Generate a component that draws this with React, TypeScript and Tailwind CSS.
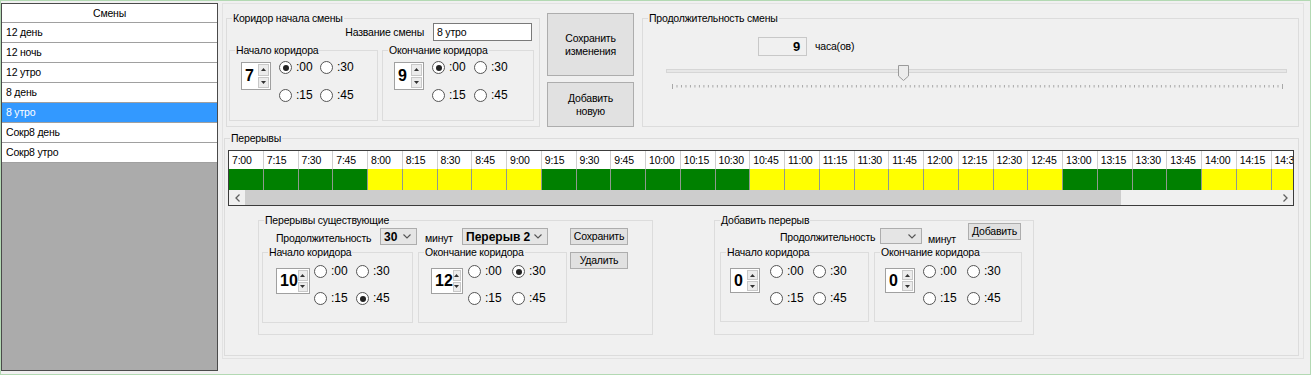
const shifts = ["12 день", "12 ночь", "12 утро", "8 день", "8 утро", "Сокр8 день", "Сокр8 утро"];

const times: string[] = [];
for (let m = 7 * 60; m <= 14 * 60 + 30; m += 15) {
  times.push(`${Math.floor(m / 60)}:${String(m % 60).padStart(2, "0")}`);
}
// green = рабочее время, yellow = коридор перерыва
const slots = times.map((_, i) => (i < 4 || (i >= 9 && i <= 14) || (i >= 24 && i <= 27) ? "g" : "y"));

function Group({ title, className, children }: { title: string; className: string; children?: React.ReactNode }) {
  return (
    <div className={"relative shrink-0 border border-[#dcdcdc] " + className}>
      <span className="absolute -top-[7px] left-[5px] bg-[#f0f0f0] px-[1px] leading-[13px] whitespace-nowrap">{title}</span>
      {children}
    </div>
  );
}

function Spin({ value, className }: { value: string; className: string }) {
  return (
    <div className={"flex shrink-0 border border-[#a0a0a0] bg-white p-[1px] tracking-normal " + className}>
      <div className="flex flex-1 items-center pl-[2px] text-[16px] font-bold leading-none">{value}</div>
      <div className="flex w-[11px] flex-col gap-[1px]">
        {[0, 1].map((k) => (
          <div key={k} className="flex flex-1 items-center justify-center border border-[#c8c8c8] bg-[#ececec]">
            <svg width="5" height="3" viewBox="0 0 5 3">
              <path d={k === 0 ? "M0 3 L2.5 0 L5 3 Z" : "M0 0 L2.5 3 L5 0 Z"} fill="#333" />
            </svg>
          </div>
        ))}
      </div>
    </div>
  );
}

function Radio({ label, on }: { label: string; on?: boolean }) {
  return (
    <div className="flex h-[13px] items-center whitespace-nowrap">
      <span className="flex h-[13px] w-[13px] shrink-0 items-center justify-center rounded-full border border-[#555] bg-white">
        {on && <span className="h-[6px] w-[6px] rounded-full bg-[#222]" />}
      </span>
      <span className="ml-[4px] text-[12px] tracking-normal">{label}</span>
    </div>
  );
}

function Radios({ checked, className }: { checked: string; className: string }) {
  return (
    <div className={"grid shrink-0 " + className}>
      {[":00", ":30", ":15", ":45"].map((l) => (
        <Radio key={l} label={l} on={l === checked} />
      ))}
    </div>
  );
}

function Chevron() {
  return (
    <svg width="8" height="5" viewBox="0 0 8 5" className="shrink-0">
      <polyline points="0.5,0.5 4,4 7.5,0.5" fill="none" stroke="#555" strokeWidth="1.1" />
    </svg>
  );
}

function Combo({ value, className }: { value?: string; className: string }) {
  return (
    <div className={"flex shrink-0 items-center justify-between border border-[#adadad] bg-[#e5e5e5] pl-[3px] pr-[5px] text-[12px] font-bold leading-none tracking-normal " + className}>
      <span>{value}</span>
      <Chevron />
    </div>
  );
}

function Btn({ children, className }: { children: React.ReactNode; className: string }) {
  return (
    <div className={"flex shrink-0 items-center justify-center border border-[#adadad] bg-[#e1e1e1] text-center leading-[13px] " + className}>
      {children}
    </div>
  );
}

export default function App() {
  return (
    <div className="flex h-[375px] w-[1311px] items-start overflow-hidden border border-[#b3d9b3] bg-[#f0f0f0] font-['Liberation_Sans',Arial,sans-serif] text-[10.5px] leading-[13px] tracking-[-0.2px] text-black">
      {/* список смен */}
      <div className="mt-[2px] h-[368px] w-[217px] shrink-0 border border-[#4a4a4a] bg-[#ababab]">
        <div className="flex h-[19px] items-center justify-center border-b border-[#a0a0a0] bg-white">Смены</div>
        {shifts.map((s) => (
          <div
            key={s}
            className={
              "flex h-[20px] items-center border-b border-[#a0a0a0] pl-[4px] " +
              (s === "8 утро" ? "bg-[#3399ff] text-white" : "bg-white")
            }
          >
            {s}
          </div>
        ))}
      </div>

      <div className="ml-[4px] mt-[2px] h-[356px] w-[1082px] shrink-0 border border-[#e2e2e2]">
        <div className="mt-[14px] flex items-start">
          <Group title="Коридор начала смены" className="ml-[3px] h-[109px] w-[314px]">
            <div className="mt-[4px] flex items-center justify-end gap-[9px] pr-[7px]">
              <span>Название смены</span>
              <div className="flex h-[18px] w-[99px] items-center border border-[#7a7a7a] bg-white px-[3px]">8 утро</div>
            </div>
            <div className="mt-[9px] flex gap-[4px] pl-[2px]">
              <Group title="Начало коридора" className="h-[71px] w-[149px]">
                <div className="flex items-start">
                  <Spin value="7" className="ml-[11px] mt-[11px] h-[28px] w-[30px]" />
                  <Radios checked=":00" className="ml-[8px] mt-[10px] grid-cols-[41px_auto] gap-y-[15px]" />
                </div>
              </Group>
              <Group title="Окончание коридора" className="h-[71px] w-[152px]">
                <div className="flex items-start">
                  <Spin value="9" className="ml-[11px] mt-[11px] h-[28px] w-[30px]" />
                  <Radios checked=":00" className="ml-[8px] mt-[10px] grid-cols-[42px_auto] gap-y-[15px]" />
                </div>
              </Group>
            </div>
          </Group>

          <div className="-mt-[5px] ml-[7px] flex shrink-0 flex-col">
            <Btn className="h-[63px] w-[87px]">
              Сохранить
              <br />
              изменения
            </Btn>
            <Btn className="mt-[6px] h-[45px] w-[87px]">
              Добавить
              <br />
              новую
            </Btn>
          </div>

          <Group title="Продолжительность смены" className="ml-[8px] h-[109px] w-[657px]">
            <div className="ml-[115px] mt-[18px] flex items-center">
              <div className="flex h-[19px] w-[49px] items-center justify-end border border-[#c8c8c8] bg-[#f0f0f0] pr-[6px] text-[13px] font-bold">9</div>
              <span className="ml-[8px]">часа(ов)</span>
            </div>
            <div className="relative ml-[23px] mt-[13px] h-[4px] w-[621px] border border-[#d6d6d6] bg-[#e7e7e7]">
              <svg width="11" height="16" viewBox="0 0 11 16" className="absolute -top-[5px] left-[231px]">
                <path d="M0.5 0.5 H10.5 V11 L5.5 15.5 L0.5 11 Z" fill="#ececec" stroke="#9a9a9a" />
              </svg>
            </div>
            <svg width="612" height="5" className="ml-[29px] mt-[11px] block">
              {Array.from({ length: 137 }, (_, i) => {
                const x = 0.5 + i * (610 / 136);
                const edge = i === 0 || i === 136;
                return <line key={i} x1={x} x2={x} y1={edge ? 0 : 1} y2={edge ? 5 : 3.5} stroke="#a8a8a8" />;
              })}
            </svg>
          </Group>
        </div>

        <Group title="Перерывы" className="ml-[1px] mt-[11px] h-[218px] w-[1075px]">
          <div className="ml-[3px] mt-[11px] h-[56px] w-[1066px] overflow-hidden border border-[#3c3c3c] bg-white">
            <div className="flex h-[18px]">
              {times.map((t) => (
                <div key={t} className="flex w-[34.75px] shrink-0 items-center border-r border-[#cfcfcf] pl-[3px] whitespace-nowrap">
                  {t}
                </div>
              ))}
            </div>
            <div className="flex h-[21px]">
              {slots.map((c, i) => (
                <div
                  key={i}
                  className={"w-[34.75px] shrink-0 border-r border-[#8f9a8f] " + (c === "g" ? "bg-[#008000]" : "bg-[#ffff00]")}
                />
              ))}
            </div>
            <div className="flex h-[15px] items-stretch bg-[#f0f0f0]">
              <div className="flex w-[16px] shrink-0 items-center justify-center">
                <svg width="5" height="8" viewBox="0 0 5 8">
                  <polyline points="4.5,0.5 1,4 4.5,7.5" fill="none" stroke="#606060" strokeWidth="1.3" />
                </svg>
              </div>
              <div className="w-[876px] shrink-0 bg-[#cdcdcd]" />
              <div className="flex-1" />
              <div className="flex w-[16px] shrink-0 items-center justify-center">
                <svg width="5" height="8" viewBox="0 0 5 8">
                  <polyline points="0.5,0.5 4,4 0.5,7.5" fill="none" stroke="#606060" strokeWidth="1.3" />
                </svg>
              </div>
            </div>
          </div>

          <div className="mt-[14px] flex items-start">
            <Group title="Перерывы существующие" className="ml-[33px] h-[115px] w-[395px]">
              <div className="flex items-start">
                <div className="ml-[3px] flex w-[304px] shrink-0 flex-col">
                  <div className="mt-[7px] flex h-[17px] items-center">
                    <span className="ml-[14px] mt-[3px] w-[104px] shrink-0">Продолжительность</span>
                    <Combo value="30" className="h-[17px] w-[37px]" />
                    <span className="ml-[8px] mt-[4px] w-[37px] shrink-0">минут</span>
                    <Combo value="Перерыв 2" className="h-[17px] w-[86px]" />
                  </div>
                  <div className="mt-[7px] flex gap-[5px]">
                    <Group title="Начало коридора" className="h-[71px] w-[151px]">
                      <div className="flex items-start">
                        <Spin value="10" className="ml-[13px] mt-[15px] h-[26px] w-[34px]" />
                        <Radios checked=":45" className="ml-[4px] mt-[12px] grid-cols-[42px_auto] gap-y-[14px]" />
                      </div>
                    </Group>
                    <Group title="Окончание коридора" className="h-[71px] w-[149px]">
                      <div className="flex items-start">
                        <Spin value="12" className="ml-[12px] mt-[15px] h-[26px] w-[32px]" />
                        <Radios checked=":30" className="ml-[5px] mt-[12px] grid-cols-[44px_auto] gap-y-[14px]" />
                      </div>
                    </Group>
                  </div>
                </div>
                <div className="ml-[4px] mt-[7px] flex shrink-0 flex-col">
                  <Btn className="h-[17px] w-[58px]">Сохранить</Btn>
                  <Btn className="mt-[7px] h-[17px] w-[58px]">Удалить</Btn>
                </div>
              </div>
            </Group>

            <Group title="Добавить перерыв" className="ml-[61px] h-[115px] w-[320px]">
              <div className="mt-[2px] flex items-start">
                <span className="ml-[65px] mt-[8px] w-[100px] shrink-0">Продолжительность</span>
                <Combo className="mt-[5px] h-[16px] w-[42px]" />
                <span className="ml-[6px] mt-[10px] w-[40px] shrink-0">минут</span>
                <Btn className="h-[17px] w-[53px]">Добавить</Btn>
              </div>
              <div className="ml-[5px] mt-[6px] flex gap-[5px]">
                <Group title="Начало коридора" className="h-[70px] w-[149px]">
                  <div className="flex items-start">
                    <Spin value="0" className="ml-[9px] mt-[15px] h-[25px] w-[30px]" />
                    <Radios checked="" className="ml-[10px] mt-[12px] grid-cols-[43px_auto] gap-y-[14px]" />
                  </div>
                </Group>
                <Group title="Окончание коридора" className="h-[70px] w-[148px]">
                  <div className="flex items-start">
                    <Spin value="0" className="ml-[10px] mt-[15px] h-[25px] w-[30px]" />
                    <Radios checked="" className="ml-[8px] mt-[12px] grid-cols-[44px_auto] gap-y-[14px]" />
                  </div>
                </Group>
              </div>
            </Group>
          </div>
        </Group>
      </div>
    </div>
  );
}
